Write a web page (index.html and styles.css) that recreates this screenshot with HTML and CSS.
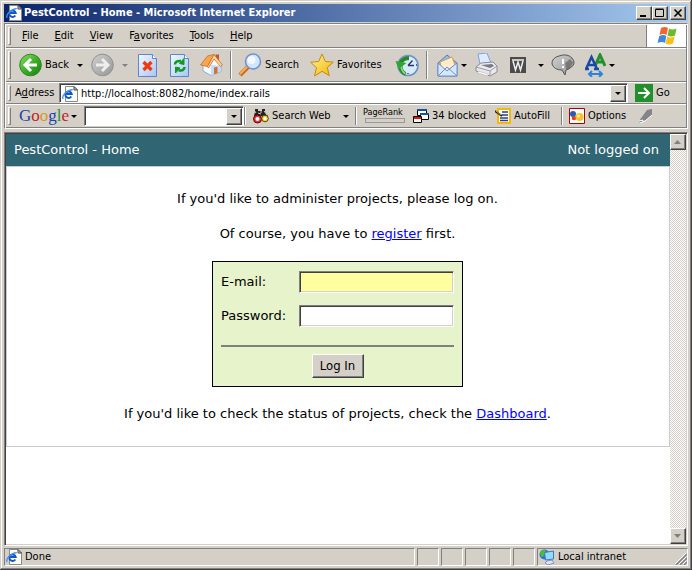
FILE: index.html
```html
<!DOCTYPE html>
<html lang="en">
<head>
<meta charset="utf-8">
<title>PestControl - Home - Microsoft Internet Explorer</title>
<link rel="stylesheet" href="styles.css">
</head>
<body>
<svg width="0" height="0" class="defs" aria-hidden="true">
  <defs>
    <linearGradient id="green" x1="0" y1="0" x2="1" y2="1"><stop offset="0" stop-color="#8fdc6c"/><stop offset=".5" stop-color="#3fae2a"/><stop offset="1" stop-color="#15800f"/></linearGradient>
    <linearGradient id="grey" x1="0" y1="0" x2="1" y2="1"><stop offset="0" stop-color="#d0d0d0"/><stop offset="1" stop-color="#969696"/></linearGradient>
    <linearGradient id="sheet" x1="0" y1="0" x2="1" y2="1"><stop offset="0" stop-color="#f4f9ff"/><stop offset="1" stop-color="#a4c6fa"/></linearGradient>
    <linearGradient id="gold" x1="0" y1="0" x2="1" y2="1"><stop offset="0" stop-color="#fff79a"/><stop offset="1" stop-color="#f3b200"/></linearGradient>
    <symbol id="ie" viewBox="0 0 16 16">
      <path d="M3.500 .5h8.500l3.500 3.500v11.500h-12z" fill="#fdfcf4" stroke="#8a8a86"/>
      <path d="M12 .5V4h3.500z" fill="#d4d0c8" stroke="#444"/>
      <path d="M9.300 10.500A3.200 3.200 0 1 1 9.700 8H4.500" fill="none" stroke="#1257c8" stroke-width="1.900"/>
      <path d="M1.200 12.800C-.8 10 5 3.800 10.800 3.600" fill="none" stroke="#3b93ee" stroke-width="1.300"/>
    </symbol>
  </defs>
</svg>
<div class="window">
  <header class="titlebar">
    <svg class="i16"><use href="#ie"/></svg>
    <h1>PestControl - Home - Microsoft Internet Explorer</h1>
    <button class="raised winbtn" aria-label="Minimize"><svg width="10" height="10"><path d="M1 7h6v2H1z"/></svg></button>
    <button class="raised winbtn" aria-label="Maximize"><svg width="10" height="10"><path d="M.5 1.500h8v7h-8zM.5 1h8" fill="none" stroke="#000"/></svg></button>
    <button class="raised winbtn close" aria-label="Close"><svg width="10" height="10"><path d="M1.500 1.500l7 7M8.500 1.500l-7 7" stroke="#000" stroke-width="1.600"/></svg></button>
  </header>

  <div class="bars">
    <nav class="bar menu">
      <span class="grip"></span>
      <button><u>F</u>ile</button><button><u>E</u>dit</button><button><u>V</u>iew</button><button>F<u>a</u>vorites</button><button><u>T</u>ools</button><button><u>H</u>elp</button>
      <span class="flag"><svg width="20" height="20" viewBox="0 0 20 20">
        <path d="M4 2q4-2 7 0L9.500 9q-3-2-7 0z" fill="#f26530"/><path d="M12 2.500q3 2 7.500 0L18 9.500q-4 2-7.500 0z" fill="#6db92d"/>
        <path d="M2.300 10q4-2 7 0L8 17q-3-2-7.500 0z" fill="#3f87dc"/><path d="M10.200 10.500q3 2 7.500 0L16 17.500q-4 2-7.500 0z" fill="#f7c11c"/>
      </svg></span>
    </nav>

    <div class="bar standard">
      <span class="grip"></span>
      <button><svg width="23" height="24" viewBox="0 0 23 24"><circle cx="11.500" cy="12" r="10.800" fill="url(#green)" stroke="#2c8620"/><path d="M12 6l-6 6 6 6M6 12h12" fill="none" stroke="#fff" stroke-width="3"/></svg>Back</button>
      <button class="caret" aria-label="Back history"></button>
      <button aria-label="Forward"><svg width="23" height="24" viewBox="0 0 23 24"><circle cx="11.500" cy="12" r="10.800" fill="url(#grey)" stroke="#909090"/><path d="M11 6l6 6-6 6M17 12H5" fill="none" stroke="#eee" stroke-width="3"/></svg></button>
      <button class="caret off" aria-label="Forward history"></button>
      <button aria-label="Stop"><svg width="19" height="23" viewBox="0 0 19 23"><path d="M.5.5h14l4 4v18H.5z" fill="url(#sheet)" stroke="#5f85cf"/><path d="M14.500.5v4h4" fill="#fff" stroke="#5f85cf"/><path d="M5.500 8l8 8M13.500 8l-8 8" stroke="#f03a10" stroke-width="3.200"/></svg></button>
      <button aria-label="Refresh"><svg width="19" height="23" viewBox="0 0 19 23"><path d="M.5.5h14l4 4v18H.5z" fill="url(#sheet)" stroke="#5f85cf"/><path d="M14.500.5v4h4" fill="#fff" stroke="#5f85cf"/><path d="M5 10.500q0-4 6-3.500" fill="none" stroke="#109a20" stroke-width="2.600"/><path d="M9.500 9.500L14 4.500v6z" fill="#109a20" stroke="#109a20"/><path d="M14.500 13q0 4-6 3.500" fill="none" stroke="#109a20" stroke-width="2.600"/><path d="M10 14l-4.500 5v-6z" fill="#109a20" stroke="#109a20"/></svg></button>
      <button aria-label="Home"><svg width="23" height="24" viewBox="0 0 23 24"><path d="M15.500 1.500h3.500v8h-3.500z" fill="#b55a32"/><path d="M3 12l5-7 6-2 7 9v6.500l-10 4L3 18z" fill="#f7fbff" stroke="#8fabd8"/><path d="M11 22.500V12l9.500.5v6z" fill="#c6dbfa"/><path d="M.5 12L7.500 3 14 1.500 7.500 13.500z" fill="#f9a64c" stroke="#c76b2b" stroke-width=".8"/><path d="M14 1.500l8.500 10.500-2 1.500L14 6l-5.500 9-1-1.500z" fill="#ffd39b" stroke="#c76b2b" stroke-width=".8"/><path d="M14 14.500l3.500-.8v6.500L14 21.300z" fill="#cc7434"/></svg></button>
      <span class="sep"></span>
      <button><svg width="24" height="24" viewBox="0 0 24 24"><path d="M2 22l8-8" stroke="#c76c1e" stroke-width="4.500"/><path d="M2 21l8-8" stroke="#ffae54" stroke-width="2"/><circle cx="15" cy="8.500" r="7.500" fill="#cfe8ff" stroke="#7292cc" stroke-width="1.600"/><circle cx="13.500" cy="7" r="4" fill="#fff" opacity=".75"/></svg>Search</button>
      <button><svg width="24" height="24" viewBox="0 0 24 24"><path d="M12 1l3.300 7.500 8 .6-6 5.400 2 8.200-7.300-4.400L4.500 23l2-8.300L.7 9.300l8-.8z" fill="url(#gold)" stroke="#c88a10"/></svg>Favorites</button>
      <button aria-label="History"><svg width="24" height="24" viewBox="0 0 24 24"><circle cx="13" cy="12.500" r="10" fill="#d6ebff" stroke="#6f93c5" stroke-width="1.600"/><path d="M13 12.500l4.500-5M13 12.500h6M13 20v1M21 12h1" stroke="#335" stroke-width="1.300"/><path d="M10.500 21Q4 18 6 9q3-4 8-4" fill="none" stroke="#248b28" stroke-width="4"/><path d="M10 20.500Q5 17 6.500 9.500" fill="none" stroke="#8fdc7b" stroke-width="1.800"/><path d="M.5 8l3 8 8-6z" fill="#33a337"/></svg></button>
      <span class="sep"></span>
      <button aria-label="Mail"><svg width="21" height="23" viewBox="0 0 21 23"><path d="M1 9l9-8 10 8v13H1z" fill="#94bce9" stroke="#567dbb"/><path d="M3 8l12-5 3 8-8 6-6-4z" fill="#ffeccc" stroke="#dc9a48"/><path d="M1 22l9-9 10 9M1 9l9 8 10-8v13H1z" fill="#d6e8ff" stroke="#6e92ce"/></svg></button>
      <button class="caret" aria-label="Mail options"></button>
      <button aria-label="Print"><svg width="23" height="24" viewBox="0 0 23 24"><path d="M5 11L3 1l9-1 4 10z" fill="#dcebff" stroke="#7aa3df"/><path d="M1 14l5-4 12-1 4 4v6l-7 4-14-5z" fill="#e9e9ec" stroke="#8a8a96"/><path d="M1 14l14 4 7-5M15 18v5" fill="none" stroke="#9a9aa5"/><path d="M6 12l11-1 2 2-4 2z" fill="#777b88"/><path d="M3 18l10 3v2l-10-3z" fill="#fff" stroke="#aaa" stroke-width=".5"/></svg></button>
      <button aria-label="Edit with Word"><svg width="16" height="16"><path d="M0 0h16v16H0z" fill="#4b4b4b"/><path d="M2 3h12M3 4l2.500 9L8 5l2.500 8L13 4" fill="none" stroke="#eee" stroke-width="1.500"/></svg></button>
      <button class="caret" aria-label="Edit options"></button>
      <button aria-label="Discuss"><svg width="24" height="22" viewBox="0 0 24 22"><path d="M8 2Q16-1 21 4q5 6-2 10-3 2-4 2l-1 5-3-5Q3 16 1 10 .5 4 8 2z" fill="url(#grey)" stroke="#555"/><path d="M14 9l5-4 3 4-5 7-2-1z" fill="#555" opacity=".6"/><path d="M12 5v5M12 12v2" stroke="#fff" stroke-width="2"/></svg></button>
      <button aria-label="Text size"><svg width="21" height="24" viewBox="0 0 21 24"><path d="M10 13L15 2l5 11M12 9h6" fill="none" stroke="#23902c" stroke-width="3"/><path d="M1 16L6.500 4 12 16M3 12h7M0 16h4M9 16h5" fill="none" stroke="#1749a8" stroke-width="2.500"/><path d="M4 21h12M7 18l-3 3 3 3M14 18l3 3-3 3" fill="none" stroke="#2b84dc" stroke-width="2"/></svg></button>
      <button class="caret" aria-label="Text size options"></button>
    </div>

    <form class="bar address">
      <span class="grip"></span>
      <label for="url">A<u>d</u>dress</label>
      <div class="combo">
        <svg class="i16"><use href="#ie"/></svg>
        <input id="url" type="text" value="http://localhost:8082/home/index.rails">
        <button type="button" class="raised drop" aria-label="Show addresses"></button>
      </div>
      <button type="button" class="go"><svg width="18" height="18"><path d="M0 0h18v18H0z" fill="#238f2b"/><path d="M9 4l5 5-5 5M14 9H3" fill="none" stroke="#fff" stroke-width="2"/></svg>Go</button>
    </form>

    <form class="bar google">
      <span class="grip"></span>
      <span class="logo"><span class="b">G</span><span class="r">o</span><span class="y">o</span><span class="b">g</span><span class="g">l</span><span class="r">e</span></span>
      <button type="button" class="caret" aria-label="Google menu"></button>
      <div class="combo">
        <input type="text" aria-label="Google search">
        <button type="button" class="raised drop" aria-label="Recent searches"></button>
      </div>
      <span class="sep"></span>
      <button type="button"><svg class="i16" viewBox="0 0 16 16"><path d="M2 1h3v2h4V1h3v3l3 4H1l1-4z" fill="#222"/><path d="M1 2l2 3M5 5l3 1M11 3l3 4M8 1v4" stroke="#d4d0c8"/><circle cx="4.500" cy="11" r="4" fill="#e33" stroke="#600"/><circle cx="12" cy="10.500" r="3.300" fill="#f6d831" stroke="#554400"/><circle cx="4.500" cy="11" r="2" fill="#fff"/><circle cx="12" cy="10.500" r="1.500" fill="#fff"/></svg>Search Web</button>
      <button type="button" class="caret" aria-label="Search options"></button>
      <span class="sep"></span>
      <div class="rank">PageRank<span></span></div>
      <button type="button"><svg class="i16" viewBox="0 0 16 16"><path d="M4.500 1.500h9v6h-9z" fill="#fff" stroke="#000"/><path d="M4 1h10v2H4z" fill="#164f9b"/><path d="M7.500 5.500h8v6h-8z" fill="#fff" stroke="#000"/><path d="M7 5h9v2H7z" fill="#17549b"/><path d="M.5 8.500h8v6h-8z" fill="#fff" stroke="#000"/><path d="M1 9h7v2H1z" fill="#e11"/></svg>34 blocked</button>
      <button type="button"><svg class="i16" viewBox="0 0 16 16"><path d="M3 1h12v14H3z" fill="#fff" stroke="#f5b900" stroke-width="2"/><path d="M7 4h6M7 7h6M5 10h8M5 12.500h8" stroke="#2c3c90" stroke-width="1.500"/><path d="M0 3l7 5" stroke="#222" stroke-width="2"/><path d="M1 3l5 4" stroke="#c4a84b"/></svg>AutoFill</button>
      <span class="sep"></span>
      <button type="button"><svg class="i16" viewBox="0 0 16 16"><path d="M.5.5h15v15H.5z" fill="#fff" stroke="#a00"/><circle cx="4" cy="6" r="3" fill="#245bb8"/><circle cx="5" cy="10" r="2.300" fill="#d42"/><circle cx="10.500" cy="9" r="4" fill="#f5c22a"/><circle cx="9.500" cy="8" r="1.500" fill="#fff2a0"/></svg>Options</button>
      <button type="button" aria-label="Highlight"><svg class="i16" viewBox="0 0 16 16"><path d="M1 13L9 2l5-1v6l-7 6-5 2z" fill="#848484"/><path d="M2 15l5-2 7-6M1 13l4-1v2" fill="none" stroke="#fff"/></svg></button>
    </form>
  </div>

  <div class="viewport">
    <main class="page">
      <div class="head"><span>PestControl - Home</span><span>Not logged on</span></div>
      <div class="body">
        <p>If you'd like to administer projects, please log on.</p>
        <p>Of course, you have to <a href="#register">register</a> first.</p>
        <form class="login">
          <label for="email">E-mail:</label><input id="email" type="email" class="filled">
          <label for="password">Password:</label><input id="password" type="password">
          <hr>
          <button type="button" class="raised">Log In</button>
        </form>
        <p>If you'd like to check the status of projects, check the <a href="#dashboard">Dashboard</a>.</p>
      </div>
    </main>
    <div class="scroll">
      <button class="raised" aria-label="Scroll up"><svg width="8" height="4"><path d="M0 4l3.500-4L7 4z" fill="#808080"/></svg></button>
      <button class="raised" aria-label="Scroll down"><svg width="8" height="4"><path d="M0 0h7L3.500 4z" fill="#808080"/></svg></button>
    </div>
  </div>

  <footer class="status">
    <div class="main"><svg class="i16"><use href="#ie"/></svg>Done</div>
    <div></div><div></div><div></div><div></div><div></div>
    <div class="zone"><svg class="i16" viewBox="0 0 16 16"><circle cx="5.500" cy="5.500" r="5" fill="#2f74dc"/><path d="M1 3q4-4 6-1l-2 5-3 1z" fill="#4dbb3c"/><path d="M5.500 3.500l9-1.500v8l-8 1z" fill="#8fdcff" stroke="#4774ba"/><path d="M8 12l5-1 2 3-6 2-3-2z" fill="#dfe2f2" stroke="#8890b4"/></svg>Local intranet
      <svg class="size" width="12" height="12"><path d="M1 12L12 1M5 12l7-7M9 12l3-3" stroke="#808080" stroke-width="1.500"/><path d="M0 11L11 0M4 11l7-7M8 11l3-3" stroke="#fff"/></svg></div>
  </footer>
</div>
</body>
</html>
```
FILE: styles.css
```css
* { box-sizing: border-box; }

:root {
  --face: #d4d0c8;
  --shade: #808080;
  --dark: #404040;
}

body {
  margin: 0;
  background: var(--face);
  color: #000;
  font: 11px/14px "DejaVu Sans Condensed", "DejaVu Sans", sans-serif;
}

button, input { font: inherit; color: inherit; }
button { padding: 0; border: 0; background: none; white-space: nowrap; }
svg { flex: none; display: block; }
.defs { position: absolute; }
.i16 { width: 16px; height: 16px; }

.window {
  display: flex;
  flex-direction: column;
  min-height: 100vh;
  padding: 4px;
  box-shadow: inset -1px -1px var(--dark), inset 1px 1px var(--face), inset -2px -2px var(--shade), inset 2px 2px #fff;
}

.raised {
  display: flex;
  align-items: center;
  justify-content: center;
  background: var(--face);
  border: 1px solid;
  border-color: #fff var(--dark) var(--dark) #fff;
  box-shadow: inset -1px -1px var(--shade);
}

/* Title bar */
.titlebar {
  display: flex;
  align-items: center;
  height: 18px;
  padding: 0 2px;
  background: linear-gradient(90deg, #0a246a, #a6caf0);
}
.titlebar h1 {
  flex: 1;
  margin: 0 0 0 2px;
  color: #fff;
  font-size: 11px;
  line-height: 14px;
}
.winbtn { width: 16px; height: 14px; }
.close { margin-left: 2px; }

/* Toolbars */
.bars {
  margin-top: 1px;
  border: 1px solid var(--shade);
  border-right-color: #fff;
  border-bottom-color: #fff;
  box-shadow: inset 1px 1px #fff, inset -1px -1px var(--shade);
  padding: 1px;
}
.bar {
  display: grid;
  align-items: center;
  justify-content: start;
}
.bar + .bar { border-top: 1px solid var(--shade); box-shadow: inset 0 1px #fff; padding-top: 1px; }
.bar button { display: flex; align-items: center; gap: 3px; }
.grip {
  align-self: stretch;
  width: 3px;
  margin: 2px;
  border: 1px solid;
  border-color: #fff var(--shade) var(--shade) #fff;
}
.sep {
  align-self: stretch;
  width: 2px;
  margin: 2px 0;
  border-left: 1px solid var(--shade);
  border-right: 1px solid #fff;
}
.bar .caret::before, .bar .drop::before {
  content: "";
  border: 3px solid transparent;
  border-top-color: #000;
  border-bottom: 0;
}
.bar .caret { padding-left: 3px; }
.bar .off::before { border-top-color: var(--shade); }

.menu { display: flex; height: 22px; }
.menu .grip { margin-right: 11px; }
.menu button { display: block; margin-right: 16px; }
.flag {
  display: flex;
  align-items: center;
  justify-content: center;
  align-self: stretch;
  width: 40px;
  margin-left: auto;
  background: #fff;
  border-left: 1px solid var(--shade);
}

.standard {
  height: 34px;
  grid-template-columns: 13px 55px 17px 28px 19px 32px 30px 30px 8px 72px 85px 31px 11px 21px 17px 35px 25px 16px 34px 21px 12px;
}

.address { height: 22px; grid-template-columns: 9px 44px 1fr 58px; justify-content: stretch; }
.go { padding-left: 7px; }
.combo {
  display: flex;
  align-items: center;
  align-self: stretch;
  background: #fff;
  border: 1px solid;
  border-color: var(--shade) #fff #fff var(--shade);
  box-shadow: inset 1px 1px var(--dark);
  padding: 1px 1px 0 2px;
}
.combo input {
  flex: 1;
  min-width: 0;
  padding: 0 3px;
  border: 0;
  outline: 0;
  background: none;
}
.bar .drop { width: 16px; align-self: stretch; justify-content: center; }

.google {
  height: 24px;
  grid-template-columns: 13px 49px 16px 160px 9px 87px 15px 8px 50px 82px 66px 8px 69px 16px;
}
.google .combo { margin: 1px 0; }
.logo { font: 17px/20px "Liberation Serif", serif; }
.b { color: #1c3fae; }
.r { color: #c61a24; }
.y { color: #d79a13; }
.g { color: #249434; }
.rank { font-size: 9px; line-height: 10px; padding-bottom: 3px; }
.rank span {
  display: block;
  width: 40px;
  height: 5px;
  margin: 1px 2px 0;
  border: 1px solid #999;
}

/* Document area */
.viewport {
  flex: 1;
  display: flex;
  margin: 3px 0 2px;
  border: 1px solid var(--shade);
  border-right-color: #fff;
  border-bottom-color: #fff;
  box-shadow: inset 1px 1px var(--dark), inset -1px -1px var(--face);
  padding: 1px;
  background: #fff;
}
.page { flex: 1; font: 13px/16px "DejaVu Sans", sans-serif; }
.head {
  display: flex;
  justify-content: space-between;
  padding: 8px 11px 8px 8px;
  color: #fff;
  background: #306573;
}
.body {
  display: flex;
  flex-direction: column;
  align-items: center;
  gap: 19px;
  padding: 24px 1px 24px 0;
  border: 1px solid #c8cccc;
}
.body p { margin: 0; }
.body a { color: #00f; }
.login {
  display: grid;
  grid-template-columns: 78px 155px;
  align-items: center;
  row-gap: 12px;
  padding: 9px 8px 8px;
  border: 1px solid #000;
  background: #e6f3cb;
}
.login input {
  width: 100%;
  height: 22px;
  padding: 2px 4px;
  border: 1px solid;
  border-color: var(--shade) #fff #fff var(--shade);
  box-shadow: inset 1px 1px var(--dark), inset -1px -1px var(--face);
  background: #fff;
}
.login .filled { background: #ffff9f; }
.login hr {
  grid-column: 1 / -1;
  width: 100%;
  height: 2px;
  margin: 6px 0 0;
  border: 0;
  background: var(--shade);
}
.login button {
  grid-column: 1 / -1;
  justify-self: center;
  width: 52px;
  height: 24px;
  margin-top: -5px;
  font: 13px/16px "DejaVu Sans Condensed", sans-serif;
}

.scroll {
  display: flex;
  flex-direction: column;
  justify-content: space-between;
  width: 16px;
  background: repeating-conic-gradient(#fff 0 25%, var(--face) 0 50%) 0 0 / 2px 2px;
}
.scroll button { height: 16px; }

/* Status bar */
.status { display: flex; gap: 2px; height: 18px; }
.status div {
  display: flex;
  align-items: center;
  gap: 3px;
  width: 22px;
  border: 1px solid;
  border-color: var(--shade) #fff #fff var(--shade);
  padding-left: 1px;
}
.status .main { flex: 1; }
.status .zone { width: 151px; }
.size { margin-left: auto; align-self: flex-end; }
```
